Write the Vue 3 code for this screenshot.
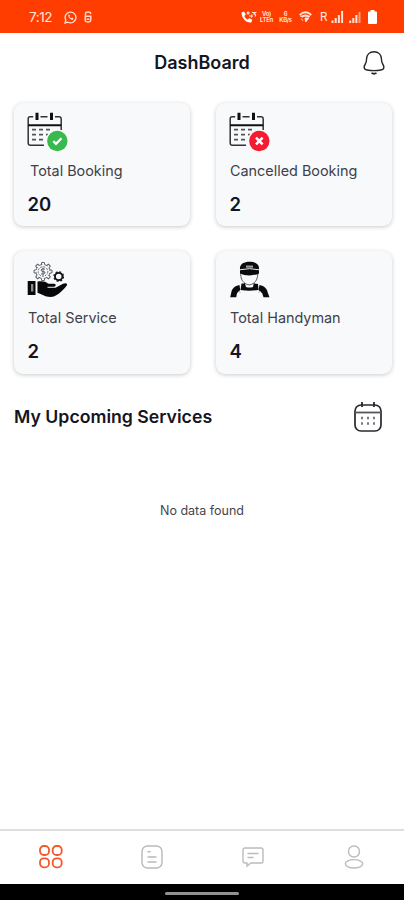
<script setup>
const cards = [
  { label: 'Total Booking', value: 20, icon: 'booked', inset: true },
  { label: 'Cancelled Booking', value: 2, icon: 'cancelled' },
  { label: 'Total Service', value: 2, icon: 'service' },
  { label: 'Total Handyman', value: 4, icon: 'handyman' },
]
const teeth = [0, 45, 90, 135, 180, 225, 270, 315]
</script>

<template>
  <div class="screen">
    <header class="status">
      <span class="time">7:12</span>
      <svg class="whatsapp" width="13" height="13" viewBox="0 0 13 13">
        <path d="M1 12l.8-3A5.400 5.400 0 1 1 4 11.200Z" fill="none" stroke="#ffe3d8" stroke-width="1.300" />
        <path d="M4.300 3.700c-.5 2.200 2.200 5.300 4.700 5l.5-1.300-1.500-.8-.7.700c-.9-.4-1.500-1-1.900-1.900l.6-.7-.6-1.300Z" fill="#ffe3d8" />
      </svg>
      <svg class="lock" width="8" height="12" viewBox="0 0 8 12">
        <path d="M6.700 3V2.500Q6.500 1 4 1T1.500 2.500V5M1.200 5.300h5.600v3.700Q6.800 11 4 11T1.200 9ZM2.500 8.200h3" fill="none" stroke="#ffd8c9" stroke-width="1.400" />
      </svg>
      <svg class="call" width="16" height="13" viewBox="0 0 16 13">
        <path d="M.5 1.500 3 .5l1.800 3-1.500 1.400c.8 1.800 1.800 2.800 3.600 3.600l1.400-1.500 3 1.800-1 2.600C5.500 12.500.5 7 .5 1.500Z" fill="#fff" />
        <path d="M6 2h3M6 2l1.500-1.500M6 2l1.500 1.500M8 5h3.500M11.500 5l-1.300-1.300M11.500 5l-1.300 1.300M11 1.500h3.500L13 3q2.500.5 1 2.500" fill="none" stroke="#ffe3d8" stroke-width="1.200" />
      </svg>
      <span class="tiny volte"><b>Vo)</b><b>LTEn</b></span>
      <span class="tiny speed"><b>6</b><b>KB/s</b></span>
      <svg class="wifi" width="13" height="12" viewBox="0 0 13 12">
        <path d="M.7 4Q6.500-1.500 12.300 4M2.700 6Q6.500 2.700 10.300 6" fill="none" stroke="#ffe7dd" stroke-width="1.800" />
        <path d="M6 7h4L6.700 11ZM2.200 7.500l1.800 2.300M1 5.200h10" fill="#ffe7dd" stroke="#ffe7dd" stroke-width=".9" />
      </svg>
      <span class="roam">R</span>
      <svg class="signal" width="13" height="12" viewBox="0 0 13 12">
        <path d="M1.500 12V9.500M4.700 12V7M7.900 12V4M11.100 12V0" stroke="#ffe3d8" stroke-width="2" />
      </svg>
      <svg class="signal second" width="12" height="12" viewBox="0 0 12 12">
        <path d="M1.200 12V9.500M4.300 12V7M7.400 12V4" stroke="#ffe3d8" stroke-width="2" />
        <path d="M10.500 12V1" stroke="#ff9f7f" stroke-width="2" />
      </svg>
      <svg class="battery" width="9" height="14" viewBox="0 0 9 14">
        <path d="M2.500 0h4v1.500H8q1 0 1 1V13q0 1-1 1H1q-1 0-1-1V2.500q0-1 1-1h1.500Z" fill="#fff" />
      </svg>
    </header>

    <div class="titlebar">
      <h1>DashBoard</h1>
      <svg class="bell" width="24" height="26" viewBox="0 0 24 26">
        <path d="M12 1.700C7.500 1.700 4.800 4.900 4.600 8.700c-.1 2.300-.2 3.600-1.300 5.300-1.500 2.300-2 5.500 1.700 6 4.700.8 9.300.8 14 0 3.700-.5 3.200-3.700 1.700-6-1.100-1.700-1.200-3-1.300-5.300C19.200 4.900 16.500 1.700 12 1.700Z" fill="none" stroke="#24262b" stroke-width="1.400" />
        <path d="M9.500 23q2.500 1.400 5 0" fill="none" stroke="#24262b" stroke-width="1.900" />
      </svg>
    </div>

    <main>
      <section class="cards">
        <article v-for="card in cards" :key="card.label" class="card">
          <svg v-if="card.icon === 'booked' || card.icon === 'cancelled'" class="icon" width="42" height="42" viewBox="0 0 42 42">
            <path d="M17 34.300H3.500Q1.200 34.300 1.200 32V8Q1.200 5.800 3 5.800h3.200M13.500 5.800h7M28 5.800h4Q34.200 5.800 34.200 8v11" fill="none" stroke="#333" stroke-width="1.500" />
            <path d="M1 14.300h33" stroke="#111" stroke-width="2" />
            <path d="M10 1.700v7.300M24.500 1.700v7.300" stroke="#111" stroke-width="3" />
            <path d="M5 18.700h4M12 18.700h4M19 18.700h4M5 23.700h4M12 23.700h4M5 28.700h4M12 28.700h4M19 23.700h2" stroke="#555" stroke-width="1.700" />
            <circle cx="30" cy="30" r="11.300" fill="#f7f9fb" />
            <circle cx="30.300" cy="30" r="10.200" :fill="card.icon === 'booked' ? '#36b94d' : '#f51c32'" />
            <path v-if="card.icon === 'booked'" d="m26.300 30.200 2.700 2.600 5.500-5.500" fill="none" stroke="#fff" stroke-width="2.300" />
            <path v-else d="m27 26.700 6.600 6.600m0-6.600-6.600 6.600" stroke="#fff" stroke-width="2.600" />
          </svg>
          <svg v-else-if="card.icon === 'service'" class="icon lower" width="42" height="42" viewBox="0 0 42 42">
            <g fill="none" stroke="#5d6167" stroke-width="1">
              <circle cx="16" cy="10.500" r="7" stroke-dasharray="3 2.498" stroke-dashoffset="-1.500" />
              <path v-for="a in teeth" :key="a" d="M14.300 3.700 14.700 1.500h2.600l.4 2.200" :transform="`rotate(${a} 16 10.500)`" />
              <circle cx="16" cy="10.500" r="4.800" stroke-dasharray="2 1.200" />
              <path d="M18 8.200q-4-1.200-4 .8t4 2q0 3-4 1.800M16 6.500v8" />
            </g>
            <circle cx="31.700" cy="15.500" r="3.700" fill="none" stroke="#111" stroke-width="1.800" />
            <circle cx="31.700" cy="15.500" r="4.800" fill="none" stroke="#111" stroke-width="1.200" stroke-dasharray="2 1.770" />
            <path d="M.7 20h7.800v14H.7Z" fill="#080808" />
            <path d="M4 23h2.300v7.500H4Z" fill="#8a8c90" />
            <path d="M10.500 20.500c5-.7 8-.2 11 2.300H27c2.500 0 2 3 0 3h-6.500v1h8l7.500-4c2.500-1.200 5-.3 3.800 1.700C37 28.500 32 33 27.500 35.300c-3.500 1.500-8.500.5-11-1l-6-2.500Z" fill="#080808" />
          </svg>
          <svg v-else class="icon lower" width="42" height="42" viewBox="0 0 42 42">
            <path d="M11.700 12c0 5 1 8 4.500 10.500 2.500 1.800 5.500 1.800 8 0 3.500-2.500 4.500-5.500 4.500-10.500M15.500 22v4M25 22v4" fill="none" stroke="#555a60" stroke-width="1" />
            <path d="M11 8C10.500 3 15 .7 20.500.7S30.500 3 30 8v4.500c-5 2.500-14 2.500-19 0Z" fill="#0b0b0b" />
            <path d="M10.700 8.800q9.800-2.300 19.600 0" fill="none" stroke="#e6e8ea" stroke-width="1" />
            <path d="M17 4.500h7v2.200h-7Z" fill="#9a9da0" />
            <path d="M12.500 22.500 16 22.500l1 3.500q3.500 1.200 7 0l1-3.500 4 .5.500 6q-9 1.500-18 0Z" fill="#0b0b0b" />
            <path d="M10.500 24c-5 1.200-7.500 3.500-8.200 7.500L1.200 36.300h6l.8-4 3.200-3.300ZM30.500 24c5 1.200 7.500 3.500 8.200 7.500l1.800 4.800h-6l-1.300-4-3.700-3.300Z" fill="#0b0b0b" />
            <path d="m9.500 30 2 2M31.500 30l-2 2" stroke="#a9adb0" />
          </svg>
          <p class="label" :class="{ inset: card.inset }">{{ card.label }}</p>
          <strong class="value">{{ card.value }}</strong>
        </article>
      </section>

      <div class="section-head">
        <h2>My Upcoming Services</h2>
        <svg width="30" height="32" viewBox="0 0 30 32">
          <rect x="2" y="4" width="26" height="26" rx="6" fill="none" stroke="#27282b" stroke-width="1.700" />
          <path d="M2 11.500h26" stroke="#55575b" stroke-width="1.800" />
          <path d="M9 1v5M21 1v5" stroke="#27282b" stroke-width="1.800" />
          <path d="M8 17h2M14 17h2M20 17h2M8 22.500h2M14 22.500h2M20 22.500h2" stroke="#77797e" stroke-width="2.600" />
        </svg>
      </div>
      <p class="empty">No data found</p>
    </main>

    <nav class="tabs">
      <svg width="26" height="26" viewBox="0 0 26 26" fill="none" stroke="#f4582b" stroke-width="1.800">
        <rect x="2" y="2" width="9" height="9" rx="3.800" /><rect x="14.700" y="2" width="9" height="9" rx="3.800" />
        <rect x="2" y="14.300" width="9" height="9" rx="3.800" /><rect x="14.700" y="14.300" width="9" height="9" rx="3.800" />
      </svg>
      <svg width="26" height="26" viewBox="0 0 26 26" fill="none" stroke="#b9b9b9" stroke-width="1.400">
        <rect x="3" y="2" width="20" height="22" rx="5.500" />
        <path d="M8.500 7.700h3M8.500 13h9M8.500 18h9" />
      </svg>
      <svg width="26" height="26" viewBox="0 0 26 26" fill="none" stroke="#bcbcbc" stroke-width="1.400">
        <path d="M5 4h16q2 0 2 2v11q0 2-2 2H11l-4 3v-3H5q-2 0-2-2V6q0-2 2-2ZM7.500 9.500h11M7.500 13.500h6" />
      </svg>
      <svg width="26" height="26" viewBox="0 0 26 26" fill="none" stroke="#bcbcbc" stroke-width="1.400">
        <circle cx="13" cy="7.500" r="5.500" /><ellipse cx="13" cy="19.800" rx="8.700" ry="4.200" />
      </svg>
    </nav>
    <footer class="gesture"><span></span></footer>
  </div>
</template>

<style>
body { background: #fff; }
</style>

<style scoped>
.screen { width: 404px; height: 900px; display: flex; flex-direction: column; overflow: hidden; background: #fff; color: #14151f; font-family: Inter, "Liberation Sans", sans-serif; }
h1, h2, p { margin: 0; }
svg { display: block; flex: none; }
.status { height: 33px; flex: none; box-sizing: border-box; display: flex; align-items: center; padding: 1px 27px 0 29px; background: #ff3d00; color: #ffe9e0; }
.time { width: 35px; font-size: 13.500px; letter-spacing: -.4px; }
.lock { margin-left: 7px; }
.call { margin-left: auto; }
.tiny { display: flex; flex-direction: column; align-items: center; font-size: 6px; line-height: 6px; letter-spacing: -.3px; }
.tiny b { font-weight: 600; }
.volte { width: 15px; margin-left: 2px; }
.speed { width: 15px; margin-left: 4px; }
.wifi { margin-left: 6px; }
.roam { width: 10px; margin-left: 8px; font: 12px Roboto, sans-serif; }
.signal { margin-left: 1px; }
.signal.second { margin-left: 5px; }
.battery { margin-left: 7px; }
.titlebar { height: 70px; flex: none; box-sizing: border-box; display: grid; grid-template-columns: 1fr auto 1fr; align-items: center; padding: 0 18px 12px; }
h1 { grid-column: 2; padding-top: 1px; font-size: 18px; line-height: 22px; font-weight: 600; }
.bell { justify-self: end; margin-top: 2px; }
main { flex: 1; }
.cards { display: grid; grid-template-columns: 176px 176px; grid-auto-rows: 123px; gap: 25px 26px; padding-left: 14px; }
.card { box-sizing: border-box; padding: 8px 14px 0; border-radius: 9px; background: #f7f9fb; box-shadow: 0 1px 4px rgba(20, 25, 30, .23); }
.icon { margin-left: -1px; }
.icon.lower { padding-top: 2px; margin-bottom: -3px; }
.label { margin-top: 8px; color: #3e414a; font-size: 14.400px; line-height: 20px; white-space: nowrap; }
.label.inset { padding-left: 2px; }
.value { display: block; margin-top: 11px; margin-left: -.5px; font-size: 18.500px; line-height: 24px; font-weight: 600; }
.section-head { display: flex; align-items: center; justify-content: space-between; margin-top: 27px; padding: 0 21px 0 14px; }
h2 { font-size: 17.700px; line-height: 24px; font-weight: 600; }
.empty { margin-top: 69px; text-align: center; font-size: 12.500px; line-height: 18px; color: #44464b; }
.tabs { height: 55px; flex: none; box-sizing: border-box; display: grid; grid-template-columns: repeat(4, 1fr); place-items: center; padding-bottom: 1px; border-top: 2px solid #dedede; }
.gesture { height: 16px; flex: none; display: flex; align-items: center; justify-content: center; background: #000; }
.gesture span { width: 74px; height: 3px; margin-top: 2px; border-radius: 2px; background: #929292; }
</style>
